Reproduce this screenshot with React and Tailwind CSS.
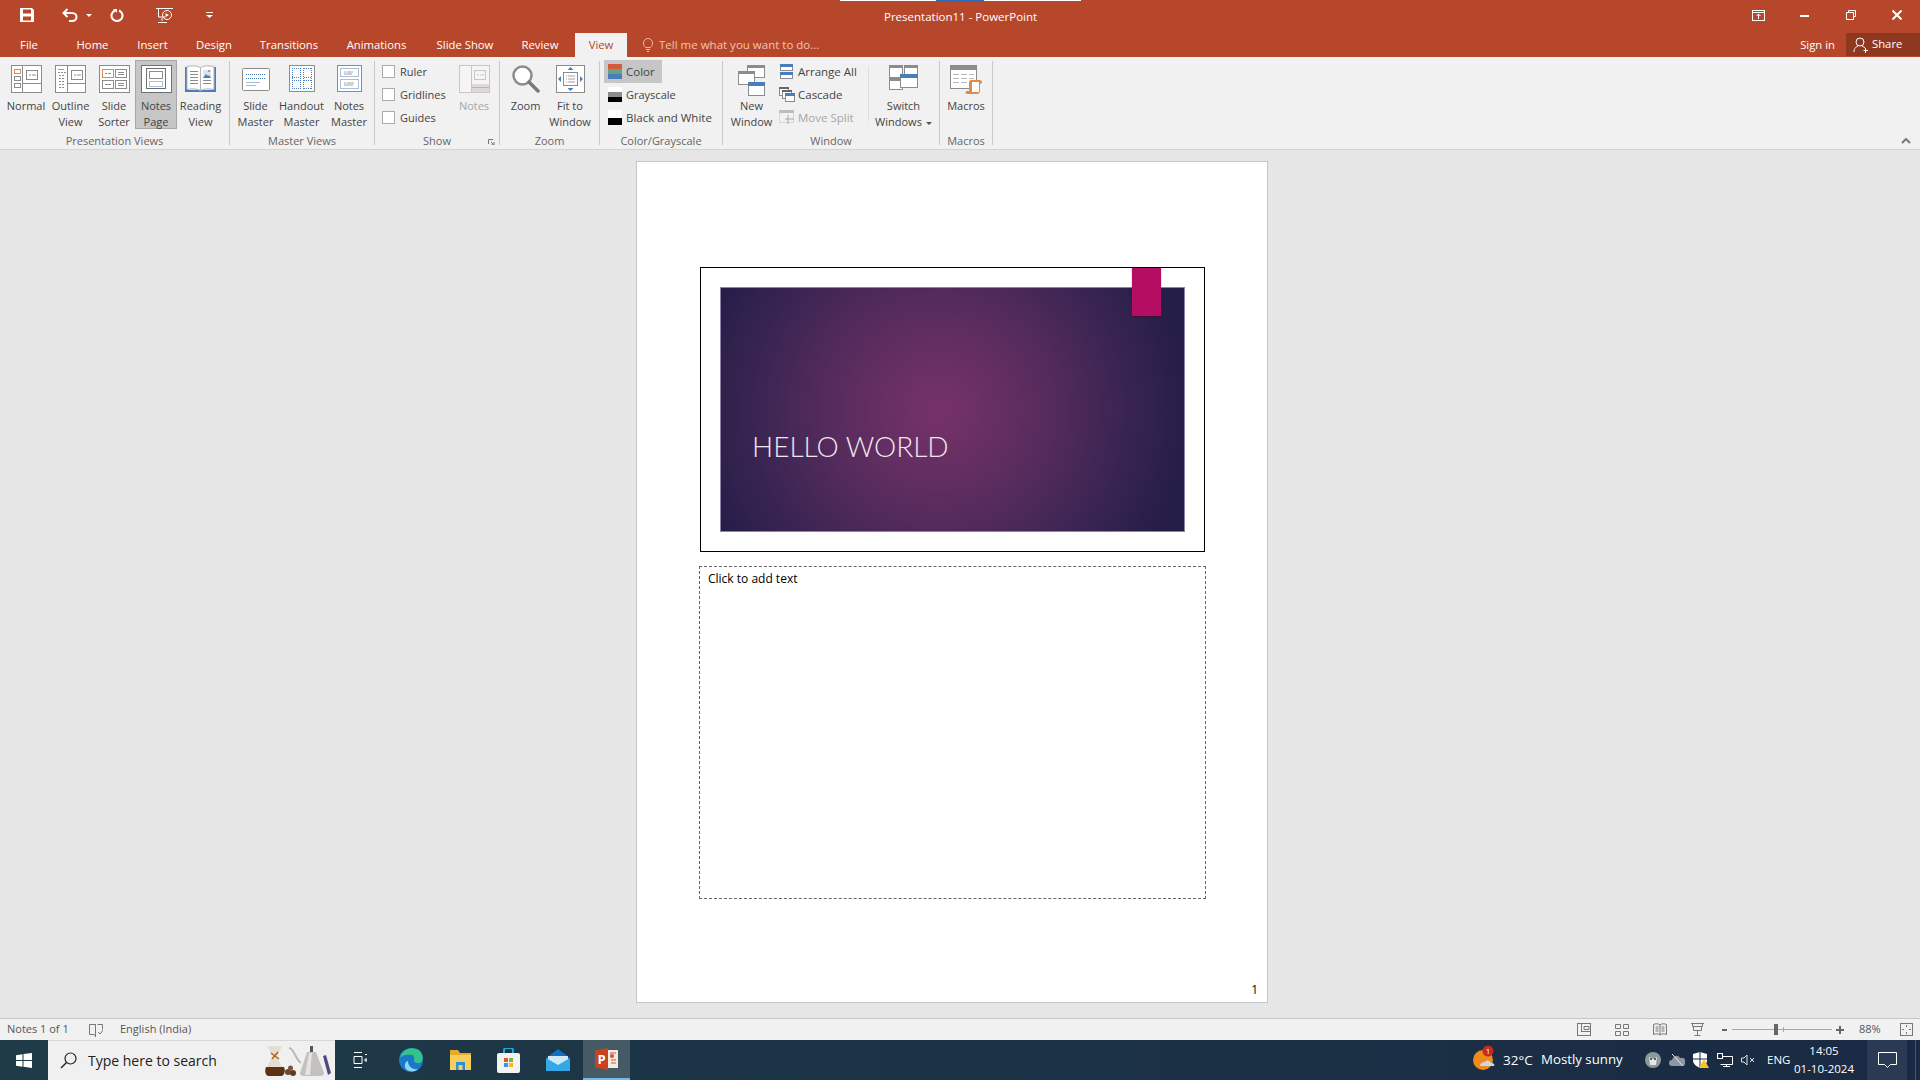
const Ico = ({ w, h, children, className = '' }) => (
  <svg width={w} height={h} viewBox={`0 0 ${w} ${h}`} fill="none" className={`shrink-0 ${className}`}>
    {children}
  </svg>
);

const G = '#8c8c8c';
const B = '#4a7ebb';
const O = '#e08a4b';

const IconNormal = () => (
  <Ico w={31} h={28}>
    <rect x=".5" y=".5" width="30" height="27" fill="#fff" stroke={G} />
    <path d="M11.5 1v26M12 18.5h18" stroke={G} />
    <rect x="3.5" y="4.5" width="6" height="4" stroke={O} />
    <rect x="3.5" y="11.5" width="6" height="4" stroke={G} />
    <rect x="3.5" y="18.5" width="6" height="4" stroke={G} />
    <rect x="15.5" y="5.5" width="11" height="9" stroke={G} />
    <path d="M18 10h2M21 10h4" stroke={G} />
  </Ico>
);
const IconOutline = () => (
  <Ico w={31} h={28}>
    <rect x=".5" y=".5" width="30" height="27" fill="#fff" stroke={G} />
    <path d="M12.5 1v26M13 18.5h17" stroke={G} />
    <path d="M3 4.5h6" stroke={O} />
    <path d="M3 7.5h8M4 10.5h6M4 13.5h6M4 16.5h6M4 19.5h6M4 22.5h6" stroke={G} strokeDasharray="2 1" />
    <rect x="16.5" y="5.5" width="11" height="9" stroke={G} />
    <path d="M19 10h2M22 10h4" stroke={G} />
  </Ico>
);
const IconSorter = () => (
  <Ico w={31} h={28}>
    <rect x=".5" y=".5" width="30" height="27" fill="#fff" stroke={G} />
    <rect x="3.5" y="4.5" width="11" height="8" stroke={O} />
    <rect x="16.5" y="4.5" width="11" height="8" stroke={G} />
    <rect x="3.5" y="15.5" width="11" height="8" stroke={G} />
    <rect x="16.5" y="15.5" width="11" height="8" stroke={G} />
    <path d="M6 8.5h2M9 8.5h3M19 7.5h6M19 9.5h6M6 19.5h6M19 18.5h6M19 20.5h6" stroke={G} />
  </Ico>
);
const IconNotesPage = () => (
  <Ico w={31} h={28}>
    <rect x=".5" y=".5" width="30" height="27" fill="#fff" stroke="#6f6f6f" />
    <rect x="5.5" y="3.5" width="19" height="20" fill="#fff" stroke="#6f6f6f" />
    <rect x="8.5" y="6.5" width="13" height="7" stroke={G} />
    <rect x="8.5" y="16.5" width="13" height="5" stroke={B} strokeDasharray="1 1" />
  </Ico>
);
const IconReading = () => (
  <Ico w={31} h={28}>
    <path d="M0 2h3v23h25V2h3v25H0z" fill={B} />
    <path d="M2 1.5c5-1 10-1 13.5 1c3.5-2 8.5-2 13.5-1v23c-5-1-10-1-13.5 1c-3.5-2-8.5-2-13.5-1z" fill="#fff" stroke="#b4b4b4" />
    <path d="M15.5 3v22" stroke="#b4b4b4" />
    <path d="M5 6.5h8M5 9.5h8M5 12.5h8M5 15.5h8M5 18.5h8M18 15.5h8M18 18.5h8" stroke="#8c8c8c" />
    <rect x="18" y="5" width="8" height="8" fill="#d8e4f2" />
    <path d="M18 13l3-4l2 2l1-1l2 3z" fill={B} />
    <rect x="23" y="5" width="2" height="2" fill={O} />
  </Ico>
);
const IconSlideMaster = () => (
  <Ico w={28} h={24} className="mt-[3px]">
    <rect x=".5" y=".5" width="27" height="22" rx="1" fill="#fff" stroke={G} />
    <path d="M4 6.5h20M4 10.5h20" stroke={B} strokeDasharray="1 1" />
    <path d="M4 14.5h14M4 17.5h10" stroke="#9dbbdd" />
  </Ico>
);
const IconHandout = () => (
  <Ico w={26} h={27}>
    <rect x=".5" y=".5" width="25" height="26" fill="#fff" stroke={G} />
    <path d="M3.5 3v21M11.5 3v21M14.5 3v21M22.5 3v21M3 3.5h8M3 12.5h8M3 15.5h8M3 23.5h8M15 3.5h8M15 12.5h8M15 15.5h8M15 23.5h8" stroke={B} strokeDasharray="1 1" />
  </Ico>
);
const IconNotesMaster = () => (
  <Ico w={25} h={27}>
    <rect x=".5" y=".5" width="24" height="26" fill="#fff" stroke={G} />
    <rect x="3.5" y="3.5" width="18" height="8" stroke={B} strokeDasharray="1 1" />
    <rect x="3.5" y="14.5" width="18" height="9" stroke={B} strokeDasharray="1 1" />
    <path d="M7 7h2M10 7h6M7 9h8M7 18h2M10 18h7M7 20h9" stroke="#8c8c8c" strokeWidth=".8" />
  </Ico>
);
const IconNotesGray = () => (
  <Ico w={31} h={28}>
    <rect x=".5" y=".5" width="30" height="27" fill="#f5f5f5" stroke="#c9c5ca" />
    <path d="M12.5 1v26" stroke="#c9c5ca" />
    <rect x="13" y="19" width="17" height="8" fill="#dcd8dc" />
    <path d="M13 22.5h17" stroke="#b8b4b8" />
    <rect x="15.5" y="5.5" width="11" height="9" stroke="#c9c5ca" />
    <path d="M18 10h2M21 10h4" stroke="#c9c5ca" />
  </Ico>
);
const IconZoom = () => (
  <Ico w={28} h={28}>
    <circle cx="10.5" cy="10.5" r="9" fill="#fff" stroke="#8c8c8c" strokeWidth="2.5" />
    <path d="M17 17l9 9" stroke="#7a7a7a" strokeWidth="3.5" strokeLinecap="round" />
  </Ico>
);
const IconFit = () => (
  <Ico w={29} h={28}>
    <rect x=".5" y=".5" width="28" height="27" fill="#fff" stroke={G} />
    <rect x="7.5" y="7.5" width="14" height="13" stroke={G} />
    <path d="M10 11h1M12 11h7M10 14h1M12 14h7M10 17h1M12 17h7" stroke="#a0a0a0" />
    <path d="M14.5 2l3 3h-6zM14.5 26l3-3h-6zM2 14l3-3v6zM27 14l-3-3v6z" fill={B} />
  </Ico>
);
const Win = ({ x, y, w, h, bar = G, head = 3 }) => (
  <>
    <rect x={x + 0.5} y={y + 0.5} width={w - 1} height={h - 1} fill="#fff" stroke={G} />
    <rect x={x} y={y} width={w} height={head} fill={bar} />
  </>
);
const IconNewWindow = () => (
  <Ico w={28} h={31}>
    <Win x={9} y={0} w={18} h={13} />
    <Win x={0} y={6} w={17} h={14} />
    <Win x={10} y={17} w={17} h={14} bar={B} head={4} />
  </Ico>
);
const IconSwitch = () => (
  <Ico w={30} h={25}>
    <Win x={0} y={0} w={14} h={13} />
    <Win x={15} y={0} w={14} h={13} />
    <Win x={0} y={13} w={14} h={12} />
    <Win x={11} y={9} w={18} h={14} bar={B} head={4} />
  </Ico>
);
const IconMacros = () => (
  <Ico w={32} h={29}>
    <rect x=".5" y=".5" width="26" height="23" fill="#fff" stroke={G} />
    <rect x="0" y="0" width="27" height="5" fill={G} />
    <path d="M3 9.5h6M11 9.5h6M19 9.5h5M3 13.5h6M11 13.5h6M19 13.5h5M3 17.5h6M11 17.5h6" stroke="#bdbdbd" />
    <path d="M21 15h9c1 0 2 1 2 2s-1 2-2 2v7c0 2-1 3-3 3h-10c-2 0-2-3 0-3h2v-9c0-1 1-2 2-2z" fill={O} />
    <path d="M22 17h7v10h-7z" fill="#fff" />
  </Ico>
);
const IconArrange = () => (
  <Ico w={13} h={15} className="ml-px">
    <Win x={0} y={0} w={13} h={7} bar={B} head={3} />
    <Win x={0} y={8} w={13} h={7} bar={B} head={3} />
  </Ico>
);
const IconCascade = () => (
  <Ico w={16} h={15}>
    <Win x={0} y={0} w={10} h={9} bar="#666" head={2} />
    <Win x={3} y={3} w={10} h={9} bar="#666" head={2} />
    <Win x={6} y={6} w={10} h={9} bar={B} head={3} />
  </Ico>
);
const IconMoveSplit = () => (
  <Ico w={16} h={15}>
    <rect x=".5" y=".5" width="14" height="12" stroke="#bdbdbd" strokeDasharray="1 1" />
    <rect x="0" y="0" width="15" height="3" fill="#bdbdbd" />
    <path d="M9 5v9M6 9h9" stroke="#a8a8a8" />
  </Ico>
);

const LargeButton = ({ width, icon, lines, active, muted, caret }) => (
  <div
    className={`flex h-[69px] flex-col items-center border pt-1 ${active ? 'border-[#a8a8a8] bg-[#c6c6c6]' : 'border-transparent'}`}
    style={{ width }}
  >
    <div className="flex h-[33px] shrink-0 items-start justify-center">{icon}</div>
    <div className={`shrink-0 text-center leading-[16px] ${muted ? 'text-[#a6a6a6]' : 'text-[#444]'}`}>
      {lines.map((l, i) => (
        <div key={l} className="whitespace-nowrap">
          {l}
          {caret && i === lines.length - 1 && <span className="ml-1 inline-block h-0 w-0 border-x-[3px] border-t-[3px] border-x-transparent border-t-[#555] align-middle" />}
        </div>
      ))}
    </div>
  </div>
);

const Group = ({ width, label, children, launcher }) => (
  <div className="relative flex h-full shrink-0 flex-col" style={{ width }}>
    <div className="flex h-[76px] pt-[3px]">{children}</div>
    <div className="flex h-[16px] items-center justify-center text-[#666]">{label}</div>
    {launcher && (
      <svg width="7" height="6" viewBox="0 0 7 6" className="absolute bottom-[4px] right-[4px]">
        <path d="M.5 5V.5H5M3 3l3 3M6 3v3H3" stroke="#777" fill="none" />
      </svg>
    )}
  </div>
);

const Sep = () => <div className="my-1 w-px shrink-0 bg-[#c9c9c9]" />;

const Check = ({ label }) => (
  <div className="flex h-[23px] items-center">
    <div className="h-[13px] w-[13px] border border-[#ababab] bg-white" />
    <span className="ml-[5px] whitespace-nowrap pt-px text-[#444]">{label}</span>
  </div>
);

const Swatch = ({ stripes }) => (
  <div className="flex h-[15px] w-[14px] flex-col">
    {stripes.map((c, i) => (
      <div key={i} className="flex-1" style={{ background: c }} />
    ))}
  </div>
);

const SmallRow = ({ icon, label, muted }) => (
  <div className="flex h-[23px] items-center">
    <div className="flex w-[19px] justify-start">{icon}</div>
    <span className={`whitespace-nowrap pt-px text-[11.5px] ${muted ? 'text-[#a6a6a6]' : 'text-[#444]'}`}>{label}</span>
  </div>
);

const TABS = [
  ['File', 58],
  ['Home', 69],
  ['Insert', 51],
  ['Design', 72],
  ['Transitions', 78],
  ['Animations', 97],
  ['Slide Show', 80],
  ['Review', 70],
];

const ViewIcon = ({ children }) => (
  <div className="flex w-[38px] justify-center">
    <Ico w={14} h={13}>{children}</Ico>
  </div>
);

const TrayBox = ({ width, children, className = '' }) => (
  <div className={`flex h-full shrink-0 items-center justify-center ${className}`} style={{ width }}>
    {children}
  </div>
);

export default function App() {
  return (
    <div className="relative flex h-[1080px] w-[1920px] flex-col overflow-hidden bg-[#e6e6e6] font-['Open_Sans','Noto_Sans',sans-serif] text-[11px]">
      {/* title strip from the capture tool */}
      <div className="absolute left-[840px] top-0 flex h-px w-[241px]">
        <div className="w-[96px] bg-white" />
        <div className="w-[48px] bg-[#2b6cb8]" />
        <div className="flex-1 bg-white" />
      </div>

      <div className="h-[57px] shrink-0 bg-[#b7472a] text-white">
        <div className="flex h-[33px]">
          <div className="flex w-[884px] items-center pb-[3px] pl-5">
            <Ico w={14} h={14}>
              <path d="M0 0h12l2 2v12H0z" fill="#fff" />
              <rect x="3" y="1.5" width="8" height="4" fill="#b7472a" />
              <rect x="3" y="8.5" width="8" height="4" fill="#b7472a" />
            </Ico>
            <Ico w={16} h={14} className="ml-7">
              <path d="M5.5 1L1.5 5l4 4M2 5h8c6 0 6 8 0 8H7" stroke="#fff" strokeWidth="2" />
            </Ico>
            <div className="ml-2 h-0 w-0 border-x-[3px] border-t-[3px] border-x-transparent border-t-white" />
            <Ico w={14} h={14} className="ml-[18px]">
              <path d="M5 2.5a5.5 5.5 0 1 0 4 0" stroke="#fff" strokeWidth="2" />
              <path d="M3 1h4v4z" fill="#fff" />
            </Ico>
            <Ico w={17} h={15} className="ml-8">
              <path d="M0 .5h17M2.5 1v8h7M6 10v3M2 14.5h9" stroke="#fff" />
              <circle cx="11" cy="7" r="4.5" stroke="#fff" />
              <path d="M9.5 5v4l3.5-2z" fill="#fff" />
            </Ico>
            <Ico w={7} h={6} className="ml-[33px]">
              <path d="M0 .5h7" stroke="#fff" />
              <path d="M0 3h7L3.5 6z" fill="#fff" />
            </Ico>
          </div>
          <div className="flex items-center whitespace-nowrap text-[11.5px]">Presentation11 - PowerPoint</div>
          <div className="ml-auto flex items-center pb-[3px]">
            <Ico w={13} h={11}>
              <rect x=".5" y=".5" width="12" height="10" stroke="#fff" />
              <path d="M1 2.5h11M6.5 9V4M4.5 6l2-2l2 2" stroke="#fff" />
            </Ico>
            <div className="ml-[35px] h-[2px] w-[9px] translate-y-[1px] bg-white" />
            <Ico w={10} h={10} className="ml-[37px]">
              <path d="M2.5 2.5v-2h7v6h-2M.5 2.5h7v7h-7z" stroke="#fff" />
            </Ico>
            <Ico w={10} h={10} className="ml-9 mr-[18px]">
              <path d="M.5.5l9 9M9.5.5l-9 9" stroke="#fff" strokeWidth="2" />
            </Ico>
          </div>
        </div>
        <div className="flex h-[24px] items-center text-[11.3px]">
          {TABS.map(([t, w]) => (
            <div key={t} className="text-center" style={{ width: w }}>
              {t}
            </div>
          ))}
          <div className="flex h-full w-[52px] items-center justify-center bg-[#f1f1f1] text-[#b7472a]">View</div>
          <Ico w={10} h={14} className="ml-4">
            <path d="M2.5 9.5C1 8 .5 7 .5 5a4.5 4.5 0 0 1 9 0c0 2-.5 3-2 4.500zM3 11.5h4M4 13.5h2" stroke="#eeb9a8" />
          </Ico>
          <span className="ml-[6px] text-[11.5px] text-[#f0c4b6]">Tell me what you want to do...</span>
          <span className="ml-auto">Sign in</span>
          <div className="ml-[11px] flex h-[23px] w-[74px] items-center self-start bg-[#8f3820] pl-[7px]">
            <Ico w={15} h={16}>
              <circle cx="7" cy="5" r="4" stroke="#fff" />
              <path d="M1 15c0-4 2-5 4-6M9 9c1 .3 2 1 3 2M10.5 13.5h4.5M12.5 11v5" stroke="#fff" />
            </Ico>
            <span className="ml-[4px]">Share</span>
          </div>
        </div>
      </div>

      <div className="relative flex h-[93px] shrink-0 border-b border-[#d4d4d4] bg-[#f1f1f1]">
        <Group width={229} label="Presentation Views">
          <div className="flex pl-1">
            <LargeButton width={44} icon={<IconNormal />} lines={['Normal']} />
            <LargeButton width={45} icon={<IconOutline />} lines={['Outline', 'View']} />
            <LargeButton width={42} icon={<IconSorter />} lines={['Slide', 'Sorter']} />
            <LargeButton width={42} icon={<IconNotesPage />} lines={['Notes', 'Page']} active />
            <LargeButton width={47} icon={<IconReading />} lines={['Reading', 'View']} />
          </div>
        </Group>
        <Sep />
        <Group width={144} label="Master Views">
          <div className="flex pl-1">
            <LargeButton width={43} icon={<IconSlideMaster />} lines={['Slide', 'Master']} />
            <LargeButton width={49} icon={<IconHandout />} lines={['Handout', 'Master']} />
            <LargeButton width={46} icon={<IconNotesMaster />} lines={['Notes', 'Master']} />
          </div>
        </Group>
        <Sep />
        <Group width={124} label="Show" launcher>
          <div className="flex pl-[7px]">
            <div className="w-[76px]">
              <Check label="Ruler" />
              <Check label="Gridlines" />
              <Check label="Guides" />
            </div>
            <LargeButton width={32} icon={<IconNotesGray />} lines={['Notes']} muted />
          </div>
        </Group>
        <Sep />
        <Group width={99} label="Zoom">
          <div className="flex pl-1">
            <LargeButton width={43} icon={<IconZoom />} lines={['Zoom']} />
            <LargeButton width={46} icon={<IconFit />} lines={['Fit to', 'Window']} />
          </div>
        </Group>
        <Sep />
        <Group width={122} label="Color/Grayscale">
          <div className="flex flex-col pl-1">
            <div className="flex h-[23px] w-[58px] items-center bg-[#c6c6c6] pl-1">
              <Swatch stripes={['#d15b3a', '#6aa085', '#4b7db8']} />
              <span className="ml-1 pt-px text-[11.5px] text-[#444]">Color</span>
            </div>
            <div className="flex h-[23px] items-center pl-1">
              <Swatch stripes={['#fff', '#8c8c8c', '#000']} />
              <span className="ml-1 pt-px text-[#444]">Grayscale</span>
            </div>
            <div className="flex h-[23px] items-center pl-1">
              <Swatch stripes={['#fff', '#000']} />
              <span className="ml-1 whitespace-nowrap pt-px text-[11.5px] text-[#444]">Black and White</span>
            </div>
          </div>
        </Group>
        <Sep />
        <Group width={216} label="Window">
          <div className="flex pl-1">
            <LargeButton width={49} icon={<IconNewWindow />} lines={['New', 'Window']} />
            <div className="ml-[3px] w-[89px]">
              <SmallRow icon={<IconArrange />} label="Arrange All" />
              <SmallRow icon={<IconCascade />} label="Cascade" />
              <SmallRow icon={<IconMoveSplit />} label="Move Split" muted />
            </div>
            <div className="my-[7px] h-[54px] w-px bg-[#dcdcdc]" />
            <LargeButton width={69} icon={<IconSwitch />} lines={['Switch', 'Windows']} caret />
          </div>
        </Group>
        <Sep />
        <Group width={52} label="Macros">
          <LargeButton width={52} icon={<IconMacros />} lines={['Macros']} />
        </Group>
        <Sep />
        <Ico w={10} h={6} className="absolute bottom-[5px] right-[9px]">
          <path d="M1 5l4-4l4 4" stroke="#777" strokeWidth="2" />
        </Ico>
      </div>

      <div className="min-h-0 flex-1 pl-[636px] pt-[11px]">
        <div className="h-[842px] w-[632px] border border-[#c6c6c6] bg-white pl-[63px] pt-[105px]">
          <div className="relative h-[285px] w-[505px] border border-black pl-[19px] pt-[19px]">
            <div className="flex h-[245px] w-[465px] items-end border border-[#8f84a6] bg-[radial-gradient(circle_at_47%_50%,#763268_0%,#5f2d60_30%,#3f2654_62%,#241d47_92%)] pb-[68px] pl-[31px]">
              <span className="font-['Lato',sans-serif] text-[28px] font-light leading-[34px] text-[#efe6ee]">HELLO WORLD</span>
            </div>
            <div className="absolute left-[431px] top-0 h-[48px] w-[29px] bg-[#b40e62] shadow-[0_1px_1px_rgba(80,0,40,0.6)]" />
          </div>
          <div className="-ml-px mt-[14px] h-[333px] w-[507px] border border-dashed border-[#666] pl-[8px] pt-[3px] text-[12px] leading-[18px] text-black">
            Click to add text
          </div>
          <div className="mt-[82px] flex justify-end pr-[9px] text-[12px] leading-[18px] text-black">1</div>
        </div>
      </div>

      <div className="flex h-[22px] shrink-0 items-center border-t border-[#c6c6c6] bg-[#f1f1f1] text-[#555]">
        <span className="ml-[7px] w-[82px] text-[11px]">Notes 1 of 1</span>
        <Ico w={14} h={14}>
          <path d="M6.5 1.5h-6v10h5M8.5 1.5h5v5M5.5 12.5l1 1M6.5 1v13M9 9l2 2l3-4" stroke="#777" />
        </Ico>
        <span className="ml-[17px] text-[11px]">English (India)</span>
        <div className="ml-auto flex items-center pr-[7px]">
          <ViewIcon>
            <rect x=".5" y=".5" width="13" height="12" stroke="#777" />
            <path d="M4.5 1v8M4 8.5h10M7 3.5h5v3H7z" stroke="#777" />
          </ViewIcon>
          <ViewIcon>
            <path d="M.5 1.5h5v4h-5zM8.5 1.5h5v4h-5zM.5 8.5h5v4h-5zM8.5 8.5h5v4h-5z" stroke="#777" />
          </ViewIcon>
          <ViewIcon>
            <path d="M.5 1.5c2-1 5-1 6.5.5c1.5-1.5 4.5-1.5 6.5-.5v10c-2-1-5-1-6.5.5c-1.5-1.5-4.5-1.5-6.5-.5zM7 2v10M2.5 4h3M2.5 6h3M2.5 8h3M8.5 4h3M8.5 6h3M8.5 8h3" stroke="#777" />
          </ViewIcon>
          <ViewIcon>
            <path d="M0 .5h13M1.5 1v2.5h10V1M2.5 3.5v4h8v-4M6.5 8v4M3.5 12.5h6" stroke="#777" />
          </ViewIcon>
          <div className="ml-[5px] h-[2px] w-[5px] bg-[#666]" />
          <div className="relative ml-[5px] h-px w-[100px] bg-[#a8a8a8]">
            <div className="absolute left-[42px] top-[-5px] h-[11px] w-[4px] bg-[#666]" />
            <div className="absolute left-[51px] top-[-2px] h-[5px] w-px bg-[#a8a8a8]" />
          </div>
          <Ico w={8} h={8} className="ml-1">
            <path d="M0 4h8M4 0v8" stroke="#666" strokeWidth="2" />
          </Ico>
          <span className="ml-[15px] w-[41px] text-[11px]">88%</span>
          <Ico w={13} h={13}>
            <rect x=".5" y=".5" width="12" height="12" stroke="#777" />
            <path d="M6.5 2v2M6.5 9v2M2 6.5h2M9 6.5h2" stroke="#777" />
          </Ico>
        </div>
      </div>

      <div className="flex h-[40px] shrink-0 bg-[linear-gradient(90deg,#1f3b47,#1c3546_35%,#1a2a44)] text-white">
        <TrayBox width={48}>
          <Ico w={16} h={15}>
            <path d="M0 2.2L6.5 1.2V7H0zM7.5 1L16 0v7H7.5zM0 8h6.5v5.8L0 12.8zM7.5 8H16v7l-8.5-1.2z" fill="#fff" />
          </Ico>
        </TrayBox>
        <div className="flex h-full w-[287px] shrink-0 items-center border-t border-[#d8d8d8] bg-[#f0f0f0] pl-3 text-[#222]">
          <Ico w={17} h={17}>
            <circle cx="10.5" cy="6.5" r="5.5" stroke="#222" strokeWidth="1.2" />
            <path d="M6.5 10.5L1 16" stroke="#222" strokeWidth="1.5" />
          </Ico>
          <span className="ml-[11px] whitespace-nowrap text-[14px]">Type here to search</span>
          <Ico w={66} h={32} className="ml-[48px]">
            <path d="M3 1h14l-5 11l6 12c1 3-1 7-3 7H4c-3 0-4-4-3-7l6-12z" fill="#e5ded0" />
            <path d="M1 22h18c2 4 0 9-3 9H4c-3 0-5-4-3-9z" fill="#5a3317" />
            <path d="M6 8l8 6M13 7l-6 7" stroke="#b5651d" strokeWidth="1.5" />
            <circle cx="23" cy="27" r="3" fill="#6c4630" />
            <circle cx="28" cy="28" r="3" fill="#5a3a28" />
            <circle cx="25.5" cy="23" r="2.5" fill="#7a5238" />
            <path d="M24 3c5 0 6 11 12 15" stroke="#b9b9b9" strokeWidth="2" />
            <path d="M42 7h9l8 21c0 2-2 3-4 3H39c-3 0-4-1-4-3z" fill="#c4c2be" />
            <path d="M44 8h3l-2 22h-5z" fill="#e6e4e0" />
            <path d="M45 1h3v6h-3z" fill="#555" />
            <path d="M58 11l3-1l5 18l-3 2z" fill="#4f4a7f" />
          </Ico>
        </div>
        <TrayBox width={49}>
          <Ico w={15} h={16}>
            <path d="M2 .5h8M2 15.5h8M2 4.5h8v7H2zM13 2.5h2M13 7h2v2h-2z" stroke="#fff" />
          </Ico>
        </TrayBox>
        <TrayBox width={53}>
          <Ico w={24} h={24}>
            <circle cx="12" cy="12" r="12" fill="#1b78c9" />
            <path d="M1 10C3 1 12-1 18 1c5 2 7 8 5 12c-1 3-7 3-8 0c0-3 1-5-2-6C8 6 3 7 1 10z" fill="#35c18a" />
            <path d="M9 13c0 5 4 9 10 8c-3 3-8 3-11 1C5 20 5 14 9 13z" fill="#8fd6f5" />
          </Ico>
        </TrayBox>
        <TrayBox width={46}>
          <Ico w={21} h={20}>
            <path d="M0 0h8l2 3h11v17H0z" fill="#e8a92c" />
            <path d="M0 5h21v15H0z" fill="#f7cd5c" />
            <path d="M6 20v-8h9v8h-2.5v-5h-4v5z" fill="#2b8fd9" />
          </Ico>
        </TrayBox>
        <TrayBox width={50}>
          <Ico w={23} h={25}>
            <path d="M7 6V3c0-2 1-3 2-3h5c1 0 2 1 2 3v3" stroke="#2aa4dc" strokeWidth="2" />
            <rect x="0" y="5" width="23" height="20" rx="2" fill="#f3f3f3" />
            <rect x="7" y="10" width="4" height="4" fill="#e8552d" />
            <rect x="12" y="10" width="4" height="4" fill="#7db928" />
            <rect x="7" y="15" width="4" height="4" fill="#2f9be0" />
            <rect x="12" y="15" width="4" height="4" fill="#f6b90b" />
          </Ico>
        </TrayBox>
        <TrayBox width={50}>
          <Ico w={24} h={22}>
            <path d="M12 0l12 9v13H0V9z" fill="#0f6fc0" />
            <path d="M2 7h20v4l-10 6L2 11z" fill="#cfe9f8" />
            <path d="M0 9l12 7l12-7v13H0z" fill="#35a7e8" />
          </Ico>
        </TrayBox>
        <div className="flex h-full w-[47px] shrink-0 items-center justify-center border-b-2 border-[#76b9ed] bg-[#455a64]">
          <Ico w={23} h={22}>
            <rect x="10" y="2" width="13" height="18" fill="#f5e9e3" />
            <path d="M15 5h6M16 12h5M16 15h5" stroke="#d2532f" />
            <circle cx="17" cy="8" r="2" fill="#d2532f" />
            <path d="M0 2.5L13 0v22L0 19.5z" fill="#c8431f" />
            <text x="2.5" y="16" fontSize="13" fontWeight="700" fill="#fff" fontFamily="Open Sans">P</text>
          </Ico>
        </div>
        <div className="ml-auto flex h-full items-center">
          <Ico w={24} h={24} className="overflow-visible">
            <circle cx="11" cy="12" r="10" fill="#f08a1d" />
            <path d="M8 18c0-3 3-4 5-4c1-2 5-2 6 1c3 0 4 2 3 3z" fill="#c9d6e4" />
            <circle cx="16" cy="3" r="5.5" fill="#c42b1c" />
            <text x="16" y="6" fontSize="8" fill="#fff" textAnchor="middle" fontFamily="Open Sans">1</text>
          </Ico>
          <span className="ml-[7px] w-[38px] text-[13.5px]">32°C</span>
          <span className="w-[104px] whitespace-nowrap text-[13.25px]">Mostly sunny</span>
          <TrayBox width={16}>
            <Ico w={16} h={16}>
              <circle cx="8" cy="8" r="8" fill="#8d9a9a" />
              <path d="M4 5l4 2l4-2l-1 8H5z" fill="#e4e8e8" />
              <circle cx="6" cy="7" r="1" fill="#333" />
              <circle cx="10" cy="7" r="1" fill="#333" />
            </Ico>
          </TrayBox>
          <TrayBox width={16} className="ml-2">
            <Ico w={16} h={12}>
              <path d="M3 12a3 3 0 0 1 0-6c1-4 6-6 8-2a3.5 3.5 0 0 1 3 8z" fill="#8d97a3" />
              <path d="M3 0l11 12" stroke="#e8e8e8" />
            </Ico>
          </TrayBox>
          <TrayBox width={16} className="ml-2">
            <Ico w={16} h={16}>
              <path d="M7 0l7 2v6c0 4-3 6-7 8c-4-2-7-4-7-8V2z" fill="#fff" />
              <path d="M7 0v16M0 7h14" stroke="#1a2a44" />
              <path d="M11 7l5 9H6z" fill="#f7c325" />
            </Ico>
          </TrayBox>
          <TrayBox width={16} className="ml-2">
            <Ico w={16} h={14}>
              <path d="M3.5 3.5h12v8H3.5M9.5 12v2M6 13.5h7" stroke="#fff" />
              <rect x=".5" y=".5" width="5" height="5" fill="#1a2a44" stroke="#fff" />
            </Ico>
          </TrayBox>
          <TrayBox width={14} className="ml-2">
            <Ico w={14} h={12}>
              <path d="M.5 4H3l3-3v10L3 8H.5zM9 4l4 4M13 4l-4 4" stroke="#dfe3e8" />
            </Ico>
          </TrayBox>
          <span className="ml-[12px] w-[23px] text-[11.5px]">ENG</span>
          <div className="w-[68px] text-center text-[11.5px] leading-[18px]">
            <div>14:05</div>
            <div className="whitespace-nowrap">01-10-2024</div>
          </div>
          <div className="ml-[9px] flex h-full w-[40px] items-center justify-center bg-[#2a3a55]">
            <Ico w={19} h={17}>
              <path d="M.5.5h18v12h-6l-3 3l-3-3h-6z" stroke="#fff" />
            </Ico>
          </div>
          <div className="ml-2 h-full w-px bg-[#46566d]" />
          <div className="w-1" />
        </div>
      </div>
    </div>
  );
}
